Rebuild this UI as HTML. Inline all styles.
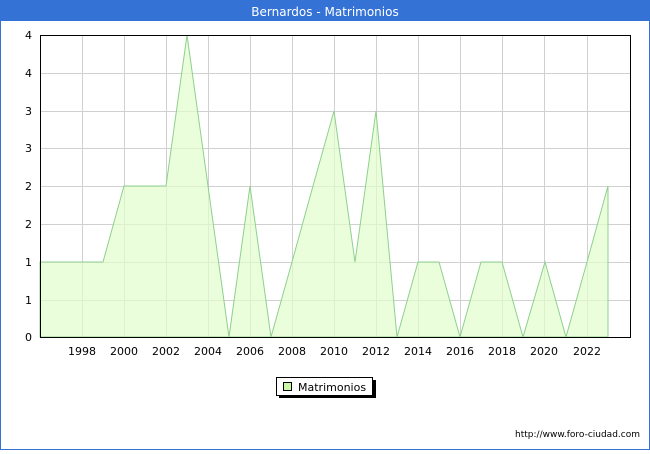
<!DOCTYPE html>
<html><head><meta charset="utf-8"><style>
body{margin:0;width:650px;height:450px;overflow:hidden;background:#fff;font-family:"DejaVu Sans","Liberation Sans",sans-serif;}
</style></head><body>
<svg width="650" height="450" xmlns="http://www.w3.org/2000/svg" font-family="DejaVu Sans, Liberation Sans, sans-serif">
<rect x="0.5" y="0.5" width="649" height="449" fill="#fff" stroke="#3472d6"/>
<rect x="0" y="0" width="650" height="21" fill="#3472d6"/>
<text x="325" y="16" text-anchor="middle" fill="#fff" font-size="12">Bernardos - Matrimonios</text>
<g stroke="#d0d0d0" stroke-width="1">
<line x1="40" y1="73.5" x2="631" y2="73.5"/><line x1="40" y1="111.5" x2="631" y2="111.5"/>
<line x1="40" y1="148.5" x2="631" y2="148.5"/><line x1="40" y1="186.5" x2="631" y2="186.5"/>
<line x1="40" y1="224.5" x2="631" y2="224.5"/><line x1="40" y1="262.5" x2="631" y2="262.5"/>
<line x1="40" y1="300.5" x2="631" y2="300.5"/>
<line x1="82.5" y1="35" x2="82.5" y2="337"/><line x1="124.5" y1="35" x2="124.5" y2="337"/>
<line x1="166.5" y1="35" x2="166.5" y2="337"/><line x1="208.5" y1="35" x2="208.5" y2="337"/>
<line x1="250.5" y1="35" x2="250.5" y2="337"/><line x1="292.5" y1="35" x2="292.5" y2="337"/>
<line x1="334.5" y1="35" x2="334.5" y2="337"/><line x1="376.5" y1="35" x2="376.5" y2="337"/>
<line x1="418.5" y1="35" x2="418.5" y2="337"/><line x1="460.5" y1="35" x2="460.5" y2="337"/>
<line x1="502.5" y1="35" x2="502.5" y2="337"/><line x1="544.5" y1="35" x2="544.5" y2="337"/>
<line x1="587.5" y1="35" x2="587.5" y2="337"/>
</g>
<polygon fill="#e2fdcc" fill-opacity="0.7" stroke="#8ed08e" stroke-width="1" points="40,337 40,262 61,262 82,262 103,262 124,186 145,186 166,186 187,35 208,186 229,337 250,186 271,337 292,262 313,186 334,111 355,262 376,111 397,337 418,262 439,262 460,337 481,262 502,262 523,337 545,262 566,337 587,262 608,186 608,337"/>
<rect x="40.5" y="35.5" width="590" height="302" fill="none" stroke="#000"/>
<g font-size="11" fill="#000" text-anchor="end">
<text x="32" y="39">4</text><text x="32" y="77">4</text><text x="32" y="115">3</text><text x="32" y="152">3</text>
<text x="32" y="190">2</text><text x="32" y="228">2</text><text x="32" y="266">1</text><text x="32" y="304">1</text><text x="32" y="341">0</text>
</g>
<g font-size="11" fill="#000" text-anchor="middle">
<text x="82" y="355">1998</text><text x="124" y="355">2000</text><text x="166" y="355">2002</text><text x="208" y="355">2004</text>
<text x="250" y="355">2006</text><text x="292" y="355">2008</text><text x="334" y="355">2010</text><text x="376" y="355">2012</text>
<text x="418" y="355">2014</text><text x="460" y="355">2016</text><text x="502" y="355">2018</text><text x="544" y="355">2020</text><text x="587" y="355">2022</text>
</g>
<rect x="279" y="380" width="97" height="18" fill="#000"/>
<rect x="276.5" y="377.5" width="96" height="18" fill="#fff" stroke="#000"/>
<rect x="283.5" y="382.5" width="8" height="8" fill="#ccf7a8" stroke="#000"/>
<text x="298" y="391" font-size="11">Matrimonios</text>
<text x="640" y="437" font-size="9" text-anchor="end">http://www.foro-ciudad.com</text>
</svg>
</body></html>
